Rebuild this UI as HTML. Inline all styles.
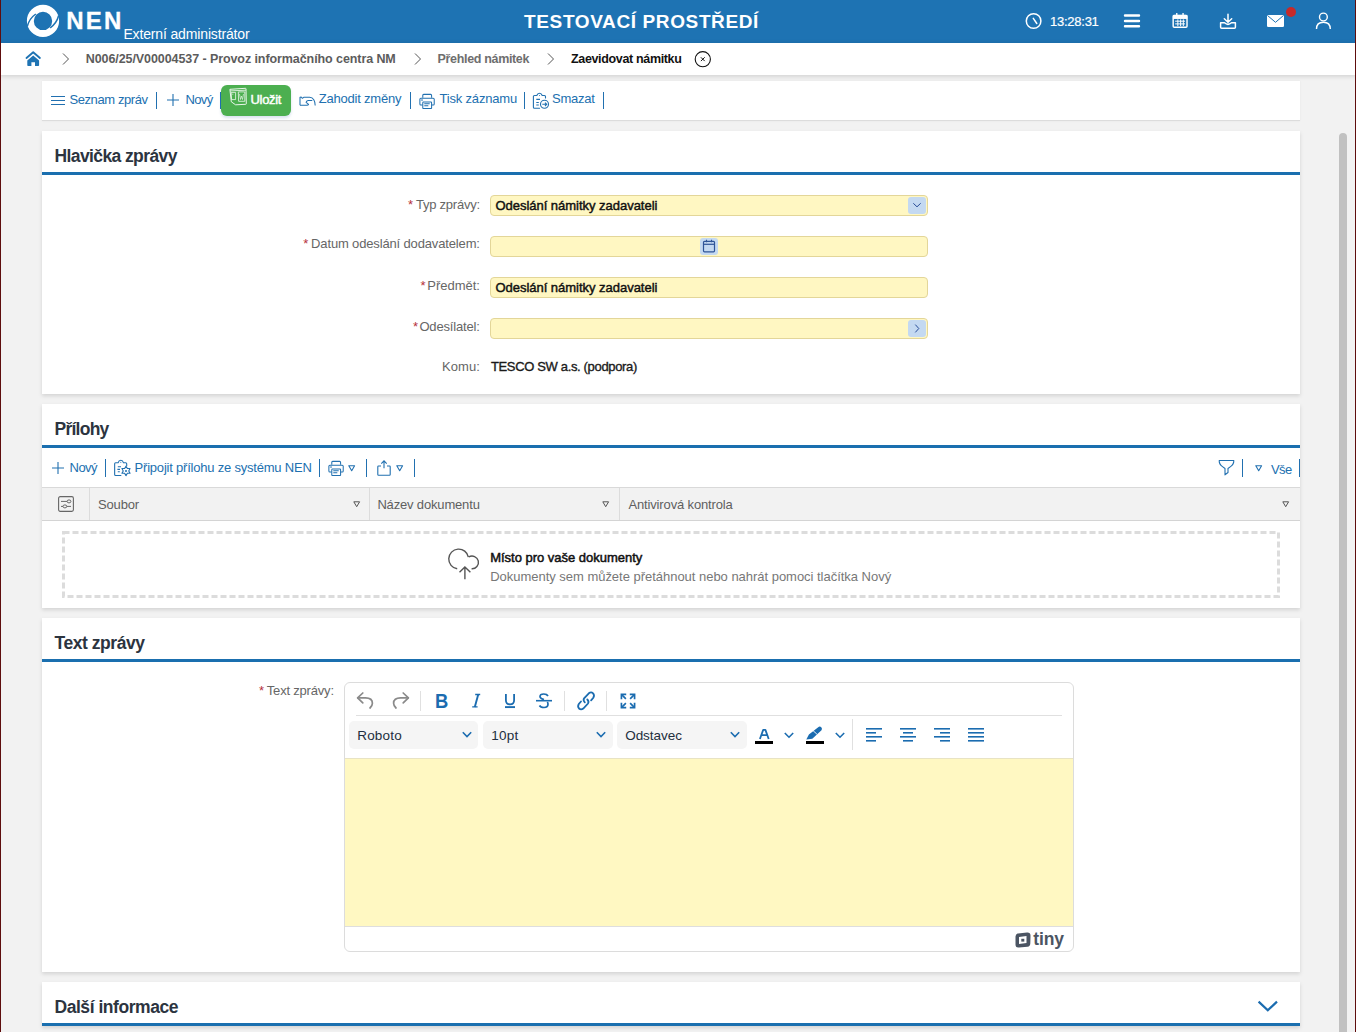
<!DOCTYPE html>
<html><head><meta charset="utf-8">
<style>
*{box-sizing:border-box;margin:0;padding:0}
html,body{width:1356px;height:1032px;overflow:hidden;background:#f2f2f2;font-family:"Liberation Sans",sans-serif;position:relative}
.a{position:absolute}
.t{position:absolute;white-space:nowrap;line-height:1}
svg{position:absolute;overflow:visible}
</style></head><body>
<div class="a" style="left:0;top:0;width:1356px;height:43px;background:#1e73b3"></div>
<svg style="left:0;top:0" width="70" height="42" viewBox="0 0 70 42">
    <circle cx="43" cy="20.9" r="12.65" fill="none" stroke="#fff" stroke-width="6.9"/>
    <path d="M35.8,14 Q29.4,18.4 27.3,26.3" fill="none" stroke="#1e73b3" stroke-width="1.5"/>
    <path d="M50.2,27.8 Q56.6,23.4 58.7,15.5" fill="none" stroke="#1e73b3" stroke-width="1.5"/>
  </svg>
<div class="t" style="left:66.2px;top:9px;font-size:24px;font-weight:bold;color:#fff;letter-spacing:2.200px;-webkit-text-stroke:0.3px #fff;">NEN</div>
<div class="t" style="left:123.4px;top:27px;font-size:14px;color:#fff;letter-spacing:-0.145px;">Externí administrátor</div>
<div class="t" style="left:524.1px;top:12px;font-size:19px;font-weight:bold;color:#fff;letter-spacing:0.621px;">TESTOVACÍ PROSTŘEDÍ</div>
<svg style="left:1024px;top:12px" width="19" height="19" viewBox="0 0 19 19">
    <circle cx="9.6" cy="9" r="7.3" fill="none" stroke="#fff" stroke-width="1.5"/>
    <path d="M9.3,6.3 L12.8,11.5" stroke="#fff" stroke-width="1.5" fill="none" stroke-linecap="round"/>
  </svg>
<div class="t" style="left:1050px;top:15px;font-size:13px;color:#fff;letter-spacing:-0.250px;-webkit-text-stroke:0.2px #fff;">13:28:31</div>
<svg style="left:1122px;top:12px" width="20" height="18" viewBox="0 0 20 18">
    <path d="M3,3.5 H17 M3,9 H17 M3,14.3 H17" stroke="#fff" stroke-width="2.4" stroke-linecap="round"/>
  </svg>
<svg style="left:1171.5px;top:12px" width="16.2" height="16.6" viewBox="0 0 18 18">
    <rect x="1.3" y="3.5" width="15.4" height="13.2" rx="1.2" fill="none" stroke="#fff" stroke-width="1.6"/>
    <rect x="1" y="3" width="16" height="4.5" fill="#fff"/>
    <path d="M5.3,1 V5 M12.3,1 V5" stroke="#fff" stroke-width="1.5"/>
    <path d="M3.5,10 H14.5 M3.5,13 H14.5 M6.5,8 V15.5 M9.6,8 V15.5 M12.6,8 V15.5" stroke="#fff" stroke-width="1.1"/>
  </svg>
<svg style="left:1219px;top:12px" width="18" height="18" viewBox="0 0 18 18">
    <path d="M9,2.3 V10 M5.3,6.8 L9,10.3 L12.7,6.8" fill="none" stroke="#fff" stroke-width="1.5" stroke-linecap="round"/>
    <path d="M1.6,10.8 H5.5 Q9,14 12.5,10.8 H16.4 V15.2 Q16.4,16.2 15.4,16.2 H2.6 Q1.6,16.2 1.6,15.2 Z" fill="none" stroke="#fff" stroke-width="1.5" stroke-linejoin="round"/>
  </svg>
<svg style="left:1266px;top:14px" width="19" height="14" viewBox="0 0 19 14">
    <rect x="1" y="1" width="17" height="12" rx="1.3" fill="#fff"/>
    <path d="M1.5,1.5 L9.5,8.3 L17.5,1.5" fill="none" stroke="#1e73b3" stroke-width="1"/>
  </svg>
<div class="a" style="left:1286px;top:7px;width:10px;height:10px;border-radius:50%;background:#c62a2a"></div>
<svg style="left:1314px;top:12px" width="19" height="18" viewBox="0 0 19 18">
    <circle cx="9.4" cy="5" r="3.9" fill="none" stroke="#fff" stroke-width="1.4"/>
    <path d="M2.5,17 Q2.5,10.3 9.4,10.3 Q16.3,10.3 16.3,17" fill="none" stroke="#fff" stroke-width="1.4"/>
  </svg>
<div class="a" style="left:0;top:43px;width:1356px;height:32px;background:#fff;box-shadow:0 1px 5px rgba(0,0,0,.16)"></div>
<svg style="left:25px;top:50px" width="17" height="17" viewBox="0 0 17 17">
    <path d="M1.5,8 L8.2,2.3 L14.9,8" fill="none" stroke="#1e73b3" stroke-width="1.9" stroke-linecap="round" stroke-linejoin="round"/>
    <path d="M2.3,10.6 L8.2,5.6 L14.1,10.6 V15.2 Q14.1,16 13.3,16 H10 V12.3 H6.4 V16 H3.1 Q2.3,16 2.3,15.2 Z" fill="#1e73b3"/>
  </svg>
<svg style="left:61px;top:52px" width="10" height="14" viewBox="0 0 10 14"><path d="M2,1.5 L7.5,7 L2,12.5" fill="none" stroke="#555" stroke-width="1"/></svg>
<svg style="left:413px;top:52px" width="10" height="14" viewBox="0 0 10 14"><path d="M2,1.5 L7.5,7 L2,12.5" fill="none" stroke="#555" stroke-width="1"/></svg>
<svg style="left:546px;top:52px" width="10" height="14" viewBox="0 0 10 14"><path d="M2,1.5 L7.5,7 L2,12.5" fill="none" stroke="#555" stroke-width="1"/></svg>
<div class="t" style="left:85.8px;top:53px;font-size:12.5px;font-weight:bold;color:#5c5c5c;letter-spacing:-0.084px;">N006/25/V00004537 - Provoz informačního centra NM</div>
<div class="t" style="left:437.6px;top:53px;font-size:12.5px;font-weight:bold;color:#6e6e6e;letter-spacing:-0.337px;">Přehled námitek</div>
<div class="t" style="left:571px;top:53px;font-size:12.5px;font-weight:bold;color:#111;letter-spacing:-0.344px;">Zaevidovat námitku</div>
<svg style="left:694px;top:51px" width="18" height="18" viewBox="0 0 18 18">
    <circle cx="8.8" cy="8.2" r="7.6" fill="none" stroke="#111" stroke-width="1.1"/>
    <path d="M6.9,6.3 L10.7,10.1 M10.7,6.3 L6.9,10.1" stroke="#111" stroke-width="1"/>
  </svg>
<div class="a" style="left:42px;top:81px;width:1258px;height:40px;background:#fff;border-bottom:1px solid #dcdcdc;box-shadow:0 0 2px rgba(0,0,0,.06)"></div>
<div class="a" style="left:42px;top:131px;width:1258px;height:263px;background:#fff;box-shadow:0 1.5px 4px rgba(0,0,0,.13)"></div>
<div class="t" style="left:54.5px;top:148px;font-size:17.5px;font-weight:bold;color:#2c343f;letter-spacing:-0.602px;">Hlavička zprávy</div>
<div class="a" style="left:42px;top:172px;width:1258px;height:3px;background:#1a6faf"></div>
<div class="a" style="left:42px;top:404px;width:1258px;height:204px;background:#fff;box-shadow:0 1.5px 4px rgba(0,0,0,.13)"></div>
<div class="t" style="left:54.5px;top:421px;font-size:17.5px;font-weight:bold;color:#2c343f;letter-spacing:-0.745px;">Přílohy</div>
<div class="a" style="left:42px;top:445px;width:1258px;height:3px;background:#1a6faf"></div>
<div class="a" style="left:42px;top:618px;width:1258px;height:354px;background:#fff;box-shadow:0 1.5px 4px rgba(0,0,0,.13)"></div>
<div class="t" style="left:54.5px;top:635px;font-size:17.5px;font-weight:bold;color:#2c343f;letter-spacing:-0.453px;">Text zprávy</div>
<div class="a" style="left:42px;top:659px;width:1258px;height:3px;background:#1a6faf"></div>
<div class="a" style="left:42px;top:982px;width:1258px;height:44px;background:#fff;box-shadow:0 1.5px 4px rgba(0,0,0,.13)"></div>
<div class="t" style="left:54.5px;top:999px;font-size:17.5px;font-weight:bold;color:#2c343f;letter-spacing:-0.455px;">Další informace</div>
<div class="a" style="left:42px;top:1023px;width:1258px;height:3px;background:#1a6faf"></div>
<svg style="left:51px;top:95px" width="15" height="11" viewBox="0 0 15 11"><path d="M0,1.5 H14 M0,5.5 H14 M0,9.5 H14" stroke="#2170b0" stroke-width="1"/></svg>
<div class="t" style="left:69.4px;top:93px;font-size:13px;color:#2170b0;letter-spacing:-0.399px;">Seznam zpráv</div>
<div class="a" style="left:156px;top:92px;width:1px;height:17px;background:#2170b0"></div>
<svg style="left:166px;top:93px" width="14" height="14" viewBox="0 0 14 14"><path d="M7,1 V13 M1,7 H13" stroke="#2170b0" stroke-width="1.1"/></svg>
<div class="t" style="left:185.4px;top:93px;font-size:13px;color:#2170b0;letter-spacing:-0.604px;">Nový</div>
<div class="a" style="left:220px;top:92px;width:1px;height:17px;background:#2170b0"></div>
<div class="a" style="left:221px;top:85px;width:70px;height:31px;background:#4caf50;border-radius:6px;box-shadow:0 2px 3px rgba(40,90,160,.18)"></div>
<svg style="left:225px;top:85px" width="25" height="25" viewBox="225 85 25 25">
  <path d="M229.9,89.3 L245.4,88.3 Q246,88.3 246,89 L246.3,103.6 Q246.3,104.3 245.6,104.3 L235.6,104.8 L231.3,101.8 Z" fill="none" stroke="#fff" stroke-width="0.95" stroke-linejoin="round" opacity=".92"/>
  <path d="M230.1,90.9 L245.8,90.2" stroke="#fff" stroke-width="0.9" opacity=".85"/>
  <path d="M231.2,92.4 H235.6 V99.6 H231.6 Z" fill="none" stroke="#fff" stroke-width="0.85" opacity=".85"/>
  <path d="M238.3,91.9 H244.8 V101.3 H238.6 Z" fill="none" stroke="#fff" stroke-width="0.85" opacity=".85"/>
  <path d="M239.5,94 L240.5,99.5 L241.5,96 L242.5,99.5 L243.5,94" fill="none" stroke="#fff" stroke-width="0.8" opacity=".7"/>
  <path d="M232.3,94.2 H233.3" stroke="#fff" stroke-width="1" opacity=".8"/>
</svg>
<div class="t" style="left:250.6px;top:93px;font-size:13px;color:#fff;letter-spacing:-0.368px;-webkit-text-stroke:0.45px #fff;">Uložit</div>
<svg style="left:295px;top:90px" width="25" height="20" viewBox="0 0 25 20">
  <path d="M5,15.3 V7.2 L6.2,7 L7.4,8.3 L8.7,7.3 H14.6 Q17.3,7.4 18.8,9.8 Q20.2,12 20.2,15.6" fill="none" stroke="#2170b0" stroke-width="1.05" stroke-linejoin="round"/>
  <path d="M17.3,10.4 H13.1 Q11.4,10.6 11.1,12.3 L13.6,14.3 Q13.2,15.3 12,15.3 H5" fill="none" stroke="#2170b0" stroke-width="1.05" stroke-linejoin="round"/>
</svg>
<div class="t" style="left:318.8px;top:92px;font-size:13px;color:#2170b0;letter-spacing:-0.212px;">Zahodit změny</div>
<div class="a" style="left:410px;top:92px;width:1px;height:17px;background:#2170b0"></div>
<svg style="left:418.6px;top:93.5px" width="16" height="15" viewBox="0 0 17 16">
  <path d="M4,4 V1.5 Q4,0.4 5,0.4 H12.4 Q13.4,0.4 13.4,1.5 V4" fill="none" stroke="#2170b0" stroke-width="1.1"/>
  <path d="M4,11.7 H2 Q0.9,11.7 0.9,10.6 V5.6 Q0.9,4.5 2,4.5 H15.1 Q16.2,4.5 16.2,5.6 V10.6 Q16.2,11.7 15.1,11.7 H13.4" fill="none" stroke="#2170b0" stroke-width="1.1"/>
  <path d="M4,15 V9.2 Q4,8.5 4.7,8.5 H12.7 Q13.4,8.5 13.4,9.2 V15 Q13.4,15.5 12.9,15.5 H4.5 Q4,15.5 4,15 Z" fill="#fff" stroke="#2170b0" stroke-width="1.1"/>
  <path d="M6,10.5 H11 M6,12.5 H9.5 M2.5,6.5 H3.8" stroke="#2170b0" stroke-width="1.1" stroke-linecap="round"/>
</svg>
<div class="t" style="left:439.5px;top:92px;font-size:13px;color:#2170b0;letter-spacing:-0.184px;">Tisk záznamu</div>
<div class="a" style="left:524px;top:92px;width:1px;height:17px;background:#2170b0"></div>
<svg style="left:533px;top:92px" width="17" height="17" viewBox="0 0 17 17">
  <path d="M12.5,6 V4.5 Q12.5,3.5 11.5,3.5 H9.2 Q8.5,1.2 6.5,1.2 Q4.5,1.2 3.8,3.5 H1.5 Q0.4,3.5 0.4,4.6 V15.3 Q0.4,16.3 1.4,16.3 H6.6" fill="none" stroke="#2170b0" stroke-width="1.1" stroke-linecap="round"/>
  <path d="M3.3,7.4 H7 M3.3,10.5 H5.8 M3.3,13 H5.8" stroke="#2170b0" stroke-width="1.1"/>
  <circle cx="6.5" cy="3.6" r="0.5" fill="#2170b0"/>
  <circle cx="11.5" cy="12.3" r="4" fill="#fff" stroke="#2170b0" stroke-width="1.1"/>
  <path d="M9.3,12.3 H13.6 M12,10.6 L13.7,12.3 L12,14" fill="none" stroke="#2170b0" stroke-width="1.1"/>
</svg>
<div class="t" style="left:552px;top:92px;font-size:13px;color:#2170b0;letter-spacing:-0.262px;">Smazat</div>
<div class="a" style="left:603px;top:92px;width:1px;height:17px;background:#2170b0"></div>
<div class="t" style="left:415.9px;top:198px;font-size:13px;color:#666;letter-spacing:-0.233px;">Typ zprávy:</div>
<div class="t" style="left:408.1px;top:198px;font-size:13px;color:#b5303a">*</div>
<div class="a" style="left:490px;top:195px;width:438px;height:21px;background:#fff7c2;border:1px solid #e3d699;border-radius:4px"></div>
<div class="t" style="left:495.4px;top:199px;font-size:13px;color:#111;letter-spacing:-0.021px;-webkit-text-stroke:0.45px #111;">Odeslání námitky zadavateli</div>
<div class="a" style="left:908px;top:197px;width:18px;height:17px;background:#c4d9f1;border-radius:3px"></div>
<svg style="left:908px;top:197px" width="18" height="17" viewBox="0 0 18 17"><path d="M5.3,6.3 L9,9.8 L12.7,6.3" fill="none" stroke="#2a4e98" stroke-width="1"/></svg>
<div class="t" style="left:311.1px;top:237px;font-size:13px;color:#666;letter-spacing:-0.148px;">Datum odeslání dodavatelem:</div>
<div class="t" style="left:303.3px;top:237px;font-size:13px;color:#b5303a">*</div>
<div class="a" style="left:490px;top:236px;width:438px;height:21px;background:#fff7c2;border:1px solid #e3d699;border-radius:4px"></div>
<div class="a" style="left:700px;top:238px;width:18px;height:17px;background:#c4d9f1;border-radius:3px"></div>
<svg style="left:700px;top:238px" width="18" height="17" viewBox="0 0 18 17">
  <rect x="3.5" y="3.3" width="11" height="10.5" rx="1" fill="none" stroke="#2f5597" stroke-width="1.2"/>
  <path d="M3.5,6.3 H14.5" stroke="#2f5597" stroke-width="1.2"/>
  <path d="M6.5,1.8 V4.3 M11.5,1.8 V4.3" stroke="#2f5597" stroke-width="1.1"/>
</svg>
<div class="t" style="left:427.3px;top:279px;font-size:13px;color:#666;letter-spacing:-0.030px;">Předmět:</div>
<div class="t" style="left:420.5px;top:279px;font-size:13px;color:#b5303a">*</div>
<div class="a" style="left:490px;top:277px;width:438px;height:21px;background:#fff7c2;border:1px solid #e3d699;border-radius:4px"></div>
<div class="t" style="left:495.4px;top:281px;font-size:13px;color:#111;letter-spacing:-0.021px;-webkit-text-stroke:0.45px #111;">Odeslání námitky zadavateli</div>
<div class="t" style="left:419.4px;top:320px;font-size:13px;color:#666;letter-spacing:-0.158px;">Odesílatel:</div>
<div class="t" style="left:412.9px;top:320px;font-size:13px;color:#b5303a">*</div>
<div class="a" style="left:490px;top:318px;width:438px;height:21px;background:#fff7c2;border:1px solid #e3d699;border-radius:4px"></div>
<div class="a" style="left:908px;top:320px;width:18px;height:17px;background:#c4d9f1;border-radius:3px"></div>
<svg style="left:908px;top:320px" width="18" height="17" viewBox="0 0 18 17"><path d="M7.3,4.6 L10.8,8.5 L7.3,12.4" fill="none" stroke="#2a4e98" stroke-width="1"/></svg>
<div class="t" style="left:442.1px;top:360px;font-size:13px;color:#666;letter-spacing:0.026px;">Komu:</div>
<div class="t" style="left:490.9px;top:360px;font-size:13px;color:#1a1a1a;letter-spacing:-0.342px;-webkit-text-stroke:0.35px #1a1a1a;">TESCO SW a.s. (podpora)</div>
<svg style="left:51px;top:461px" width="14" height="14" viewBox="0 0 14 14"><path d="M7,1 V13 M1,7 H13" stroke="#2170b0" stroke-width="1.1"/></svg>
<div class="t" style="left:69.6px;top:461px;font-size:13px;color:#2170b0;letter-spacing:-0.579px;">Nový</div>
<div class="a" style="left:105px;top:459px;width:1px;height:18px;background:#2170b0"></div>
<svg style="left:114px;top:459px" width="18" height="18" viewBox="0 0 18 18">
  <path d="M12.7,6.8 V4.8 Q12.7,3.8 11.7,3.8 H9.5 Q8.8,1.3 6.8,1.3 Q4.8,1.3 4.1,3.8 H1.6 Q0.65,3.8 0.65,4.8 V15.5 Q0.65,16.5 1.65,16.5 H6.9" fill="none" stroke="#2170b0" stroke-width="1.1" stroke-linecap="round"/>
  <path d="M3.8,7.8 H7 M3.4,10.4 H6 M3.8,12.8 H5.8" stroke="#2170b0" stroke-width="1.1"/>
  <circle cx="6.8" cy="3.3" r="0.55" fill="#2170b0"/>
  <path d="M12.00,7.20 L13.38,9.52 L16.07,9.55 L14.75,11.90 L16.07,14.25 L13.38,14.28 L12.00,16.60 L10.62,14.28 L7.93,14.25 L9.25,11.90 L7.93,9.55 L10.62,9.52 Z" fill="#fff" stroke="#2170b0" stroke-width="1.1" stroke-linejoin="round"/>
  <circle cx="12" cy="11.9" r="1" fill="#2170b0"/>
</svg>
<div class="t" style="left:134.6px;top:461px;font-size:13px;color:#2170b0;letter-spacing:-0.210px;">Připojit přílohu ze systému NEN</div>
<div class="a" style="left:319px;top:459px;width:1px;height:18px;background:#2170b0"></div>
<svg style="left:328px;top:460.5px" width="16" height="15" viewBox="0 0 17 16">
  <path d="M4,4 V1.5 Q4,0.4 5,0.4 H12.4 Q13.4,0.4 13.4,1.5 V4" fill="none" stroke="#2170b0" stroke-width="1.1"/>
  <path d="M4,11.7 H2 Q0.9,11.7 0.9,10.6 V5.6 Q0.9,4.5 2,4.5 H15.1 Q16.2,4.5 16.2,5.6 V10.6 Q16.2,11.7 15.1,11.7 H13.4" fill="none" stroke="#2170b0" stroke-width="1.1"/>
  <path d="M4,15 V9.2 Q4,8.5 4.7,8.5 H12.7 Q13.4,8.5 13.4,9.2 V15 Q13.4,15.5 12.9,15.5 H4.5 Q4,15.5 4,15 Z" fill="#fff" stroke="#2170b0" stroke-width="1.1"/>
  <path d="M6,10.5 H11 M6,12.5 H9.5 M2.5,6.5 H3.8" stroke="#2170b0" stroke-width="1.1" stroke-linecap="round"/>
</svg>
<svg style="left:347.5px;top:464.8px" width="8" height="7" viewBox="0 0 8 7"><path d="M0.8,0.8 H6.6 L3.7,5.7 Z" fill="none" stroke="#2170b0" stroke-width="1.1" stroke-linejoin="round"/></svg>
<div class="a" style="left:366px;top:459px;width:1px;height:18px;background:#2170b0"></div>
<svg style="left:377px;top:460px" width="14" height="16" viewBox="0 0 14 16">
  <path d="M4,6 H1.5 Q0.8,6 0.8,6.7 V14.5 Q0.8,15.2 1.5,15.2 H12.5 Q13.2,15.2 13.2,14.5 V6.7 Q13.2,6 12.5,6 H10" fill="none" stroke="#2170b0" stroke-width="1.1"/>
  <path d="M7,8.2 V1 M4.3,3.6 L7,0.9 L9.7,3.6" fill="none" stroke="#2170b0" stroke-width="1.1"/>
</svg>
<svg style="left:396px;top:464.8px" width="8" height="7" viewBox="0 0 8 7"><path d="M0.8,0.8 H6.6 L3.7,5.7 Z" fill="none" stroke="#2170b0" stroke-width="1.1" stroke-linejoin="round"/></svg>
<div class="a" style="left:414px;top:459px;width:1px;height:18px;background:#2170b0"></div>
<svg style="left:1218px;top:459px" width="18" height="18" viewBox="0 0 18 18">
  <path d="M1.2,1.5 H15.8 Q16,5.2 12.5,7.6 L10,9.5 V13.5 L7,15.8 V9.5 L4.5,7.6 Q1,5.2 1.2,1.5 Z" fill="none" stroke="#2170b0" stroke-width="1.1" stroke-linejoin="round"/>
</svg>
<div class="a" style="left:1242px;top:459px;width:1px;height:18px;background:#2170b0"></div>
<svg style="left:1255px;top:464.8px" width="8" height="7" viewBox="0 0 8 7"><path d="M0.8,0.8 H6.6 L3.7,5.7 Z" fill="none" stroke="#2170b0" stroke-width="1.1" stroke-linejoin="round"/></svg>
<div class="t" style="left:1271px;top:463px;font-size:13px;color:#2170b0;letter-spacing:-0.634px;">Vše</div>
<div class="a" style="left:1299px;top:459px;width:1px;height:18px;background:#2170b0"></div>
<div class="a" style="left:42px;top:487px;width:1258px;height:34px;background:#f2f2f2;border-top:1px solid #d9d9d9;border-bottom:1px solid #d4d4d4"></div>
<div class="a" style="left:89px;top:488px;width:1px;height:32px;background:#dcdcdc"></div>
<div class="a" style="left:369px;top:488px;width:1px;height:32px;background:#dcdcdc"></div>
<div class="a" style="left:619px;top:488px;width:1px;height:32px;background:#dcdcdc"></div>
<svg style="left:58px;top:496px" width="16" height="16" viewBox="0 0 16 16">
  <rect x="0.6" y="0.6" width="14.8" height="14.8" rx="1.6" fill="none" stroke="#666" stroke-width="1.1"/>
  <path d="M3,5.4 H9.1 M3,10.4 H5 M8.8,10.4 H13" stroke="#666" stroke-width="1"/>
  <ellipse cx="11" cy="5.4" rx="1.9" ry="1.5" fill="none" stroke="#666" stroke-width="1"/>
  <ellipse cx="6.9" cy="10.4" rx="1.9" ry="1.5" fill="none" stroke="#666" stroke-width="1"/>
</svg>
<div class="t" style="left:98px;top:498px;font-size:13px;color:#5f5f5f;letter-spacing:-0.153px;">Soubor</div>
<svg style="left:352.5px;top:501px" width="8" height="7" viewBox="0 0 8 7"><path d="M0.8,0.8 H6.6 L3.7,5.7 Z" fill="none" stroke="#555" stroke-width="1.0" stroke-linejoin="round"/></svg>
<div class="t" style="left:377.4px;top:498px;font-size:13px;color:#5f5f5f;letter-spacing:-0.165px;">Název dokumentu</div>
<svg style="left:602.3px;top:501px" width="8" height="7" viewBox="0 0 8 7"><path d="M0.8,0.8 H6.6 L3.7,5.7 Z" fill="none" stroke="#555" stroke-width="1.0" stroke-linejoin="round"/></svg>
<div class="t" style="left:628.4px;top:498px;font-size:13px;color:#5f5f5f;letter-spacing:-0.139px;">Antivirová kontrola</div>
<svg style="left:1282px;top:501px" width="8" height="7" viewBox="0 0 8 7"><path d="M0.8,0.8 H6.6 L3.7,5.7 Z" fill="none" stroke="#555" stroke-width="1.0" stroke-linejoin="round"/></svg>
<svg style="left:62px;top:531px" width="1218" height="67" viewBox="0 0 1218 67"><rect x="1.5" y="1.5" width="1215" height="64" fill="none" stroke="#dcdcdc" stroke-width="3" stroke-dasharray="6 3"/></svg>
<svg style="left:444px;top:544px" width="40" height="40" viewBox="0 0 40 40">
  <path d="M13.2,24.8 A9.9,9.9 0 1,1 24.4,13.2" fill="none" stroke="#555" stroke-width="1.4"/>
  <path d="M24.8,12.9 A6.4,6.4 0 1,1 27.6,24.8" fill="none" stroke="#555" stroke-width="1.4"/>
  <path d="M20.9,35.3 V22.9 M15.5,28.3 L20.9,22.9 L26.4,28.3" fill="none" stroke="#555" stroke-width="1.4"/>
</svg>
<div class="t" style="left:490.2px;top:551px;font-size:13px;color:#111;letter-spacing:-0.014px;-webkit-text-stroke:0.5px #111;">Místo pro vaše dokumenty</div>
<div class="t" style="left:490.2px;top:570px;font-size:13px;color:#777;letter-spacing:-0.024px;">Dokumenty sem můžete přetáhnout nebo nahrát pomoci tlačítka Nový</div>
<div class="t" style="left:266.8px;top:684px;font-size:13px;color:#666;letter-spacing:-0.196px;">Text zprávy:</div>
<div class="t" style="left:259.0px;top:684px;font-size:13px;color:#b5303a">*</div>
<div class="a" style="left:344px;top:682px;width:730px;height:270px;border:1px solid #dcdcdc;border-radius:6px;background:#fff"></div>
<div class="a" style="left:345px;top:758px;width:728px;height:169px;background:#fff8c2;border-top:1px solid #e8e3c4;border-bottom:1px solid #dedede"></div>
<div class="a" style="left:356px;top:715px;width:706px;height:1px;background:#e0e0e0"></div>
<svg style="left:356px;top:692px" width="18" height="18" viewBox="0 0 18 18">
  <path d="M6.8,1 L1.6,5.8 L6.8,10.8" fill="none" stroke="#8a8a8a" stroke-width="1.7" stroke-linecap="round" stroke-linejoin="round"/>
  <path d="M1.8,5.8 H9.5 Q16.4,5.8 16.4,11.3 Q16.4,13.8 14,16" fill="none" stroke="#8a8a8a" stroke-width="1.7" stroke-linecap="round"/>
</svg>
<svg style="left:392px;top:692px" width="18" height="18" viewBox="0 0 18 18">
  <path d="M11.2,1 L16.4,5.8 L11.2,10.8" fill="none" stroke="#8a8a8a" stroke-width="1.7" stroke-linecap="round" stroke-linejoin="round"/>
  <path d="M16.2,5.8 H8.5 Q1.6,5.8 1.6,11.3 Q1.6,13.8 4,16" fill="none" stroke="#8a8a8a" stroke-width="1.7" stroke-linecap="round"/>
</svg>
<div class="a" style="left:420px;top:691px;width:1px;height:20px;background:#e0e0e0"></div>
<div class="t" style="left:435.3px;top:691px;font-size:20px;font-weight:bold;color:#1b6cb0;letter-spacing:0.000px;transform:scaleX(0.92);transform-origin:0 0;">B</div>
<svg style="left:470px;top:692px" width="12" height="17" viewBox="0 0 12 17"><path d="M5.2,2.5 H10.2 M2.2,14.9 H7.6" stroke="#1b6cb0" stroke-width="1.4" fill="none"/><path d="M8.3,2.3 L4.8,15.1" stroke="#1b6cb0" stroke-width="1.9" fill="none"/></svg>
<svg style="left:503px;top:692px" width="14" height="17" viewBox="0 0 14 17"><path d="M2.9,2 V8.2 Q2.9,12.4 7,12.4 Q11.1,12.4 11.1,8.2 V2" stroke="#1b6cb0" stroke-width="1.8" fill="none"/><path d="M2,15.1 H12" stroke="#1b6cb0" stroke-width="1.9"/></svg>
<svg style="left:535px;top:692px" width="18" height="17" viewBox="0 0 18 17"><path d="M13,4 Q12,2 8.8,2 Q5,2 5,4.5 Q5,6.5 9,7.5" stroke="#1b6cb0" stroke-width="1.7" fill="none"/><path d="M12.3,10 Q13,11 13,12 Q13,15.5 9,15.5 Q5.5,15.5 4.5,13.5" stroke="#1b6cb0" stroke-width="1.7" fill="none"/><path d="M1,8.7 H17" stroke="#1b6cb0" stroke-width="1.6"/></svg>
<div class="a" style="left:564px;top:691px;width:1px;height:20px;background:#e0e0e0"></div>
<svg style="left:576px;top:691px" width="20" height="20" viewBox="0 0 20 20">
  <path d="M5,10.5 L2.8,13 Q1.3,15.5 3,17.5 Q5,19.3 7.3,17.5 L12,12.5 Q13.3,10.5 11.3,8.5" fill="none" stroke="#1b6cb0" stroke-width="1.8" stroke-linecap="round"/>
  <path d="M15.1,9.3 L17.3,6.8 Q18.8,4.3 17.1,2.3 Q15.1,0.5 12.8,2.3 L8.1,7.3 Q6.8,9.3 8.8,11.3" fill="none" stroke="#1b6cb0" stroke-width="1.8" stroke-linecap="round"/>
</svg>
<div class="a" style="left:606px;top:691px;width:1px;height:20px;background:#e0e0e0"></div>
<svg style="left:620px;top:693px" width="16" height="16" viewBox="0 0 18 18">
  <path d="M1.6,7 V1.6 H7 M11,1.6 H16.4 V7 M16.4,11 V16.4 H11 M7,16.4 H1.6 V11" fill="none" stroke="#1b6cb0" stroke-width="1.9"/>
  <path d="M2.2,2.2 L6.6,6.6 M15.8,2.2 L11.4,6.6 M15.8,15.8 L11.4,11.4 M2.2,15.8 L6.6,11.4" stroke="#1b6cb0" stroke-width="1.9"/>
</svg>
<div class="a" style="left:349px;top:721px;width:129px;height:28px;background:#f5f5f5;border-radius:5px"></div>
<div class="t" style="left:357.2px;top:729px;font-size:13.5px;color:#222f3e;letter-spacing:0.212px;">Roboto</div>
<svg style="left:461px;top:731px" width="12" height="8" viewBox="0 0 12 8"><path d="M1.8,1.3 L6,5.5 L10.2,1.3" fill="none" stroke="#1b6cb0" stroke-width="1.6"/></svg>
<div class="a" style="left:483px;top:721px;width:130px;height:28px;background:#f5f5f5;border-radius:5px"></div>
<div class="t" style="left:491.2px;top:729px;font-size:13.5px;color:#222f3e;letter-spacing:0.257px;">10pt</div>
<svg style="left:595px;top:731px" width="12" height="8" viewBox="0 0 12 8"><path d="M1.8,1.3 L6,5.5 L10.2,1.3" fill="none" stroke="#1b6cb0" stroke-width="1.6"/></svg>
<div class="a" style="left:617px;top:721px;width:130px;height:28px;background:#f5f5f5;border-radius:5px"></div>
<div class="t" style="left:625.2px;top:729px;font-size:13.5px;color:#222f3e;letter-spacing:-0.040px;">Odstavec</div>
<svg style="left:729.2px;top:731px" width="12" height="8" viewBox="0 0 12 8"><path d="M1.8,1.3 L6,5.5 L10.2,1.3" fill="none" stroke="#1b6cb0" stroke-width="1.6"/></svg>
<svg style="left:750px;top:720px" width="30" height="30" viewBox="750 720 30 30"><path d="M759.9,739 L763.2,729.9 H765.4 L768.7,739 M761.6,735.2 H767" fill="none" stroke="#1b6cb0" stroke-width="1.8" stroke-linejoin="round"/></svg>
<div class="a" style="left:755px;top:741px;width:18px;height:3px;background:#000"></div>
<svg style="left:783px;top:732px" width="12" height="8" viewBox="0 0 12 8"><path d="M1.8,1 L6,5.2 L10.2,1" fill="none" stroke="#1b6cb0" stroke-width="1.6"/></svg>
<svg style="left:800px;top:720px" width="30" height="30" viewBox="800 720 30 30">
  <path d="M818.2,727.2 Q819.8,725.9 821.3,727.3 Q822.6,728.8 821.5,730.3 L812.3,738.7 L806.3,739.6 L808.9,734.6 Z" fill="#1b6cb0"/>
  <path d="M813.1,730.7 L816.9,734.1" stroke="#fff" stroke-width="0.9"/>
</svg>
<div class="a" style="left:806px;top:741px;width:18px;height:3px;background:#000"></div>
<svg style="left:834px;top:732px" width="12" height="8" viewBox="0 0 12 8"><path d="M1.8,1 L6,5.2 L10.2,1" fill="none" stroke="#1b6cb0" stroke-width="1.6"/></svg>
<div class="a" style="left:852px;top:719px;width:1px;height:31px;background:#e0e0e0"></div>
<svg style="left:866px;top:728px" width="16" height="14" viewBox="0 0 16 14" fill="#1b6cb0"><rect x="0" y="0" width="16" height="1.6"/><rect x="0" y="4" width="10" height="1.6"/><rect x="0" y="8" width="16" height="1.6"/><rect x="0" y="12" width="10" height="1.6"/></svg>
<svg style="left:900px;top:728px" width="16" height="14" viewBox="0 0 16 14" fill="#1b6cb0"><rect x="0" y="0" width="16" height="1.6"/><rect x="3" y="4" width="10" height="1.6"/><rect x="0" y="8" width="16" height="1.6"/><rect x="3" y="12" width="10" height="1.6"/></svg>
<svg style="left:934px;top:728px" width="16" height="14" viewBox="0 0 16 14" fill="#1b6cb0"><rect x="0" y="0" width="16" height="1.6"/><rect x="6" y="4" width="10" height="1.6"/><rect x="0" y="8" width="16" height="1.6"/><rect x="6" y="12" width="10" height="1.6"/></svg>
<svg style="left:968px;top:728px" width="16" height="14" viewBox="0 0 16 14" fill="#1b6cb0"><rect x="0" y="0" width="16" height="1.6"/><rect x="0" y="4" width="16" height="1.6"/><rect x="0" y="8" width="16" height="1.6"/><rect x="0" y="12" width="16" height="1.6"/></svg>
<svg style="left:1015px;top:932px" width="16" height="16" viewBox="0 0 16 16">
  <path d="M3,1.5 L12,0.5 Q15.5,0.3 15.5,3.5 L15.3,11.5 Q15.2,14.5 12.5,14.8 L4,15.5 Q0.5,15.8 0.5,12.5 V4.5 Q0.5,1.8 3,1.5 Z M4,5 V12 L11.5,11 V4 Z" fill="#4b5563" fill-rule="evenodd"/>
  <rect x="6.3" y="6.8" width="3" height="2.8" fill="#4b5563"/>
</svg>
<div class="t" style="left:1033.3px;top:931px;font-size:17.5px;font-weight:bold;color:#4b5563;letter-spacing:-0.127px;">tiny</div>
<svg style="left:1257px;top:1000px" width="22" height="13" viewBox="0 0 22 13"><path d="M1.6,1.6 L10.8,10.2 L20,1.6" fill="none" stroke="#1b6cb0" stroke-width="2.2"/></svg>
<div class="a" style="left:1339px;top:133px;width:8px;height:1000px;background:#c1c1c1;border-radius:4px"></div>
<div class="a" style="left:0;top:0;width:1px;height:1032px;background:#5e0d0d"></div>
<div class="a" style="left:1354.5px;top:0;width:1.5px;height:1032px;background:#5e0d0d"></div>
</body></html>
